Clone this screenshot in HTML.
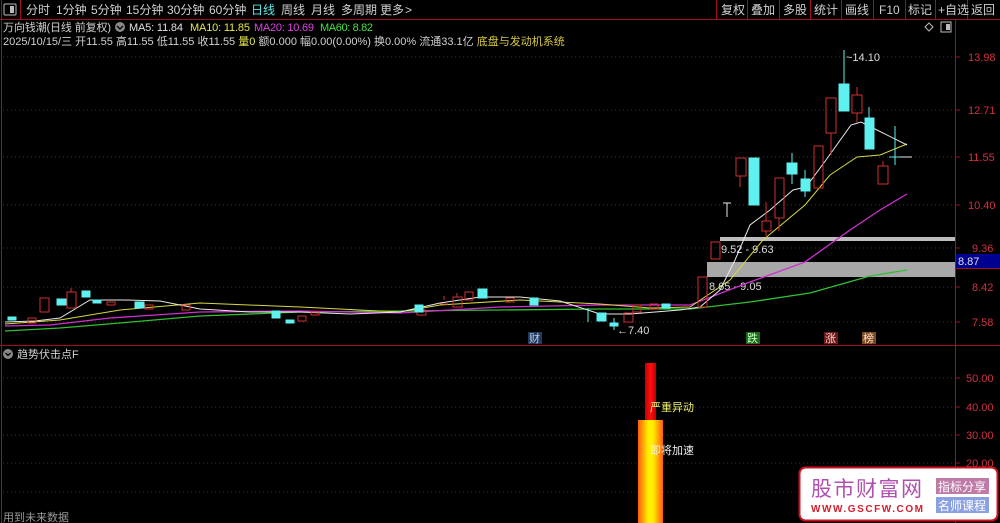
<!DOCTYPE html>
<html><head><meta charset="utf-8"><style>
body{margin:0;background:#000;width:1000px;height:523px;overflow:hidden;font-family:"Liberation Sans","Noto Sans CJK SC",sans-serif;}
svg{display:block}
text{font-family:"Liberation Sans","Noto Sans CJK SC",sans-serif;}
</style></head><body>
<svg width="1000" height="523" viewBox="0 0 1000 523" xmlns="http://www.w3.org/2000/svg">
<rect width="1000" height="523" fill="#000"/>
<!-- toolbar -->
<line x1="0" y1="19.5" x2="1000" y2="19.5" stroke="#a01020"/>
<line x1="1.5" y1="0" x2="1.5" y2="523" stroke="#a01020"/>
<rect x="4" y="4" width="12" height="11" fill="none" stroke="#bbb" rx="1"/><rect x="10" y="6" width="4" height="7" fill="#bbb"/>
<line x1="20.5" y1="0" x2="20.5" y2="19" stroke="#a01020"/>
<g font-size="12" fill="#d0d0d0">
<text x="26" y="14">分时</text><text x="56" y="14">1分钟</text><text x="91" y="14">5分钟</text><text x="126" y="14">15分钟</text><text x="167" y="14">30分钟</text><text x="209" y="14">60分钟</text>
<text x="251" y="14" fill="#5ee8e8">日线</text><text x="281" y="14">周线</text><text x="311" y="14">月线</text><text x="341" y="14">多周期</text><text x="380" y="14">更多</text><text x="405" y="14">&gt;</text>
</g>
<g stroke="#a01020"><line x1="716.5" y1="0" x2="716.5" y2="19"/><line x1="747.5" y1="0" x2="747.5" y2="19"/><line x1="779.5" y1="0" x2="779.5" y2="19"/><line x1="810.5" y1="0" x2="810.5" y2="19"/><line x1="841.5" y1="0" x2="841.5" y2="19"/><line x1="873.5" y1="0" x2="873.5" y2="19"/><line x1="905.5" y1="0" x2="905.5" y2="19"/><line x1="935.5" y1="0" x2="935.5" y2="19"/><line x1="967.5" y1="0" x2="967.5" y2="19"/></g>
<g font-size="12" fill="#d0d0d0">
<text x="721" y="14">复权</text><text x="751" y="14">叠加</text><text x="783" y="14">多股</text><text x="814" y="14">统计</text><text x="845" y="14">画线</text><text x="879" y="14">F10</text><text x="908" y="14">标记</text><text x="938" y="14">+自选</text><text x="971" y="14">返回</text>
</g>
<!-- info rows -->
<g font-size="11">
<text x="3" y="31" fill="#d0d0d0" textLength="108">万向钱潮(日线 前复权)</text>
<circle cx="120" cy="27" r="5" fill="#888"/><path d="M117 26 L120 29 L123 26" stroke="#000" fill="none" stroke-width="1.3"/>
<text x="129" y="31" fill="#e0e0e0" textLength="54">MA5: 11.84</text>
<text x="190" y="31" fill="#e6e64a" textLength="60">MA10: 11.85</text>
<text x="254" y="31" fill="#e040e0" textLength="60">MA20: 10.69</text>
<text x="320" y="31" fill="#40e040" textLength="53">MA60: 8.82</text>
<text x="3" y="45" fill="#d0d0d0">2025/10/15/三 开11.55 高11.55 低11.55 收11.55 <tspan fill="#e6e64a">量0</tspan> 额0.000 幅0.00(0.00%) 换0.00% 流通33.1亿 <tspan fill="#d8c840">底盘与发动机系统</tspan></text>
</g>
<path d="M925 27 L929 23 L933 27 L929 31 Z" fill="none" stroke="#bbb"/>
<rect x="941" y="22" width="10" height="10" fill="none" stroke="#bbb"/><rect x="946" y="24" width="4" height="6" fill="#bbb"/>
<!-- axis -->
<line x1="955.5" y1="19" x2="955.5" y2="523" stroke="#a01020"/>
<line x1="0" y1="345.5" x2="1000" y2="345.5" stroke="#a01020"/>
<g stroke="#6a1a24" stroke-dasharray="1,3">
<line x1="3" y1="57" x2="955" y2="57"/><line x1="3" y1="110" x2="955" y2="110"/><line x1="3" y1="157" x2="955" y2="157"/><line x1="3" y1="205" x2="955" y2="205"/><line x1="3" y1="248" x2="955" y2="248"/><line x1="3" y1="287" x2="955" y2="287"/><line x1="3" y1="322" x2="955" y2="322"/>
<line x1="3" y1="378" x2="955" y2="378"/><line x1="3" y1="407" x2="955" y2="407"/><line x1="3" y1="435" x2="955" y2="435"/><line x1="3" y1="463" x2="955" y2="463"/><line x1="3" y1="492" x2="955" y2="492"/>
</g>
<g stroke="#a01020"><line x1="955" y1="57" x2="960" y2="57"/><line x1="955" y1="110" x2="960" y2="110"/><line x1="955" y1="157" x2="960" y2="157"/><line x1="955" y1="205" x2="960" y2="205"/><line x1="955" y1="248" x2="960" y2="248"/><line x1="955" y1="287" x2="960" y2="287"/><line x1="955" y1="322" x2="960" y2="322"/><line x1="955" y1="378" x2="960" y2="378"/><line x1="955" y1="407" x2="960" y2="407"/><line x1="955" y1="435" x2="960" y2="435"/><line x1="955" y1="463" x2="960" y2="463"/></g>
<g font-size="11" fill="#d03040">
<text x="968" y="61">13.98</text><text x="968" y="114">12.71</text><text x="968" y="161">11.55</text><text x="968" y="209">10.40</text><text x="972" y="252">9.36</text><text x="972" y="291">8.42</text><text x="972" y="326">7.58</text>
<text x="966" y="382">50.00</text><text x="966" y="411">40.00</text><text x="966" y="439">30.00</text><text x="966" y="467">20.00</text>
</g>
<rect x="956" y="254" width="44" height="14" fill="#000090"/><line x1="956" y1="268.5" x2="1000" y2="268.5" stroke="#a01020"/>
<text x="958" y="265" font-size="11" fill="#e0e0e0">8.87</text>
<!-- gray zones -->
<rect x="720" y="237" width="235" height="4" fill="#bdbdbd"/>
<rect x="707" y="262" width="248" height="15" fill="#a8a8a8"/>
<text x="721" y="253" font-size="11" fill="#dcdcdc">9.52 - 9.63</text>
<text x="709" y="290" font-size="11" fill="#dcdcdc">8.65 - 9.05</text>
<!-- MA lines -->
<polyline fill="none" stroke="#30c030" stroke-width="1.3" points="5,331 60,328 120,323 200,316 300,312 400,311 500,310 600,309 690,309 750,302 810,293 870,276 907,270"/>
<polyline fill="none" stroke="#d030d0" stroke-width="1.3" points="5,326 50,325 110,318 200,312 300,311 400,313 500,307 600,305 690,305 750,282 805,262 850,230 880,210 907,194"/>
<polyline fill="none" stroke="#d8d840" stroke-width="1" points="5,324 60,320 120,310 200,303 300,307 400,312 440,305 520,300 600,304 650,308 690,307 730,280 763,240 805,205 830,175 857,157 880,155 907,144"/>
<polyline fill="none" stroke="#e8e8e8" stroke-width="1" points="5,322 35,321 60,318 90,300 125,300 160,301 200,309 250,312 300,312 350,314 400,312 440,303 480,297 520,297 560,301 600,314 630,314 680,310 700,307 720,290 735,260 750,225 770,210 793,190 806,187 826,160 851,125 861,122 873,128 907,145"/>
<!-- candles -->
<g stroke-width="1">
<g fill="none" stroke="#d03030">
<rect x="40" y="298" width="9" height="14"/><rect x="67" y="292" width="9" height="16"/><rect x="28" y="318" width="8" height="5"/><rect x="107" y="302" width="8" height="3"/><rect x="145" y="305" width="8" height="4"/><rect x="182" y="305" width="8" height="5"/><rect x="298" y="316" width="8" height="5"/><rect x="311" y="312" width="8" height="3"/><rect x="453" y="297" width="9" height="10"/><rect x="465" y="292" width="8" height="8"/><rect x="417" y="310" width="9" height="5"/><rect x="506" y="298" width="8" height="4"/><rect x="624" y="313" width="9" height="9"/><rect x="633" y="305" width="8" height="7"/><rect x="650" y="304" width="8" height="5"/><rect x="698" y="277" width="9" height="30"/><rect x="711" y="242" width="9" height="17"/><rect x="736" y="158" width="10" height="18"/><rect x="762" y="221" width="9" height="10"/><rect x="775" y="178" width="9" height="40"/><rect x="814" y="146" width="9" height="42"/><rect x="826" y="98" width="10" height="35"/><rect x="852" y="95" width="10" height="18"/><rect x="878" y="166" width="10" height="18"/>
</g>
<g stroke="#d03030"><line x1="71" y1="288" x2="71" y2="292"/><line x1="740" y1="176" x2="740" y2="187"/><line x1="766" y1="202" x2="766" y2="221"/><line x1="766" y1="231" x2="766" y2="236"/><line x1="779" y1="218" x2="779" y2="231"/><line x1="831" y1="133" x2="831" y2="155"/><line x1="857" y1="87" x2="857" y2="95"/><line x1="857" y1="113" x2="857" y2="123"/><line x1="883" y1="161" x2="883" y2="166"/><line x1="457" y1="293" x2="457" y2="297"/><line x1="444" y1="296" x2="444" y2="300"/><line x1="440" y1="304" x2="448" y2="304" /></g>
<g fill="#5ff0f0" stroke="#5ff0f0">
<rect x="8" y="317" width="8" height="3"/><rect x="57" y="299" width="9" height="6"/><rect x="82" y="291" width="8" height="6"/><rect x="93" y="300" width="8" height="3"/><rect x="135" y="302" width="9" height="6"/><rect x="272" y="311" width="8" height="7"/><rect x="286" y="320" width="8" height="3"/><rect x="415" y="305" width="8" height="7"/><rect x="478" y="289" width="9" height="9"/><rect x="530" y="298" width="8" height="7"/><rect x="597" y="313" width="9" height="8"/><rect x="610" y="323" width="8" height="3"/><rect x="662" y="304" width="8" height="4"/><rect x="749" y="158" width="10" height="47"/><rect x="787" y="163" width="10" height="11"/><rect x="801" y="179" width="9" height="12"/><rect x="839" y="84" width="10" height="27"/><rect x="865" y="118" width="9" height="31"/>
</g>
<g stroke="#5ff0f0"><line x1="792" y1="153" x2="792" y2="163"/><line x1="792" y1="174" x2="792" y2="184"/><line x1="805" y1="170" x2="805" y2="179"/><line x1="805" y1="191" x2="805" y2="197"/><line x1="844" y1="50" x2="844" y2="84"/><line x1="869" y1="107" x2="869" y2="118"/><line x1="895" y1="126" x2="895" y2="165"/><line x1="889" y1="157" x2="901" y2="157"/><line x1="614" y1="318" x2="614" y2="330"/><line x1="588" y1="308" x2="588" y2="322"/></g>
<g stroke="#e8e8e8"><line x1="900" y1="157" x2="912" y2="157"/><line x1="723" y1="203" x2="731" y2="203"/><line x1="727" y1="203" x2="727" y2="217"/></g>
</g>
<text x="846" y="61" font-size="11" fill="#dcdcdc">~14.10</text>
<text x="617" y="334" font-size="11" fill="#dcdcdc">←7.40</text>
<!-- markers -->
<rect x="528" y="332" width="14" height="12" fill="#203a60"/><text x="529" y="342" font-size="11" fill="#bcd">财</text>
<rect x="746" y="332" width="14" height="12" fill="#1a6a1a"/><text x="747" y="342" font-size="11" fill="#cfc">跌</text>
<rect x="824" y="332" width="14" height="12" fill="#6a1a1a"/><text x="825" y="342" font-size="11" fill="#fcc">涨</text>
<rect x="862" y="332" width="14" height="12" fill="#7a4a20"/><text x="863" y="342" font-size="11" fill="#fdc">榜</text>
<!-- indicator -->
<circle cx="8" cy="354" r="5" fill="#888"/><path d="M5.5 353 L8 355.5 L10.5 353" stroke="#000" fill="none" stroke-width="1.3"/>
<text x="17" y="358" font-size="11" fill="#d0d0d0">趋势伏击点F</text>
<defs><linearGradient id="g" x1="0" x2="1"><stop offset="0" stop-color="#ff5a10"/><stop offset="0.4" stop-color="#ffee00"/><stop offset="0.6" stop-color="#ffee00"/><stop offset="1" stop-color="#ff5a10"/></linearGradient>
<linearGradient id="r" x1="0" x2="1"><stop offset="0" stop-color="#c00000"/><stop offset="0.5" stop-color="#ff1010"/><stop offset="1" stop-color="#c00000"/></linearGradient></defs>
<rect x="645" y="363" width="11" height="57" fill="url(#r)"/>
<rect x="638" y="420" width="25" height="103" fill="url(#g)"/>
<text x="650" y="411" font-size="11" fill="#f0f070">严重异动</text>
<text x="650" y="454" font-size="11" fill="#f0f0f0">即将加速</text>
<text x="3" y="521" font-size="11" fill="#999">用到未来数据</text>
<!-- watermark -->
<rect x="799.5" y="467.5" width="198" height="53" rx="6" fill="#fff" stroke="#d01020" stroke-width="2"/>
<text x="811" y="496" font-size="21" fill="#b050b0" textLength="111" font-family="'Noto Serif CJK SC',serif">股市财富网</text>
<text x="811" y="512" font-size="10" fill="#d02030" font-weight="bold" textLength="112" font-family="'Liberation Serif',serif">WWW.GSCFW.COM</text>
<rect x="936" y="478" width="53" height="16" fill="#c07aa8"/><text x="938" y="491" font-size="12" fill="#fff">指标分享</text>
<rect x="936" y="497" width="53" height="16" fill="#8aa0e0"/><text x="938" y="510" font-size="12" fill="#fff">名师课程</text>
</svg>
</body></html>
